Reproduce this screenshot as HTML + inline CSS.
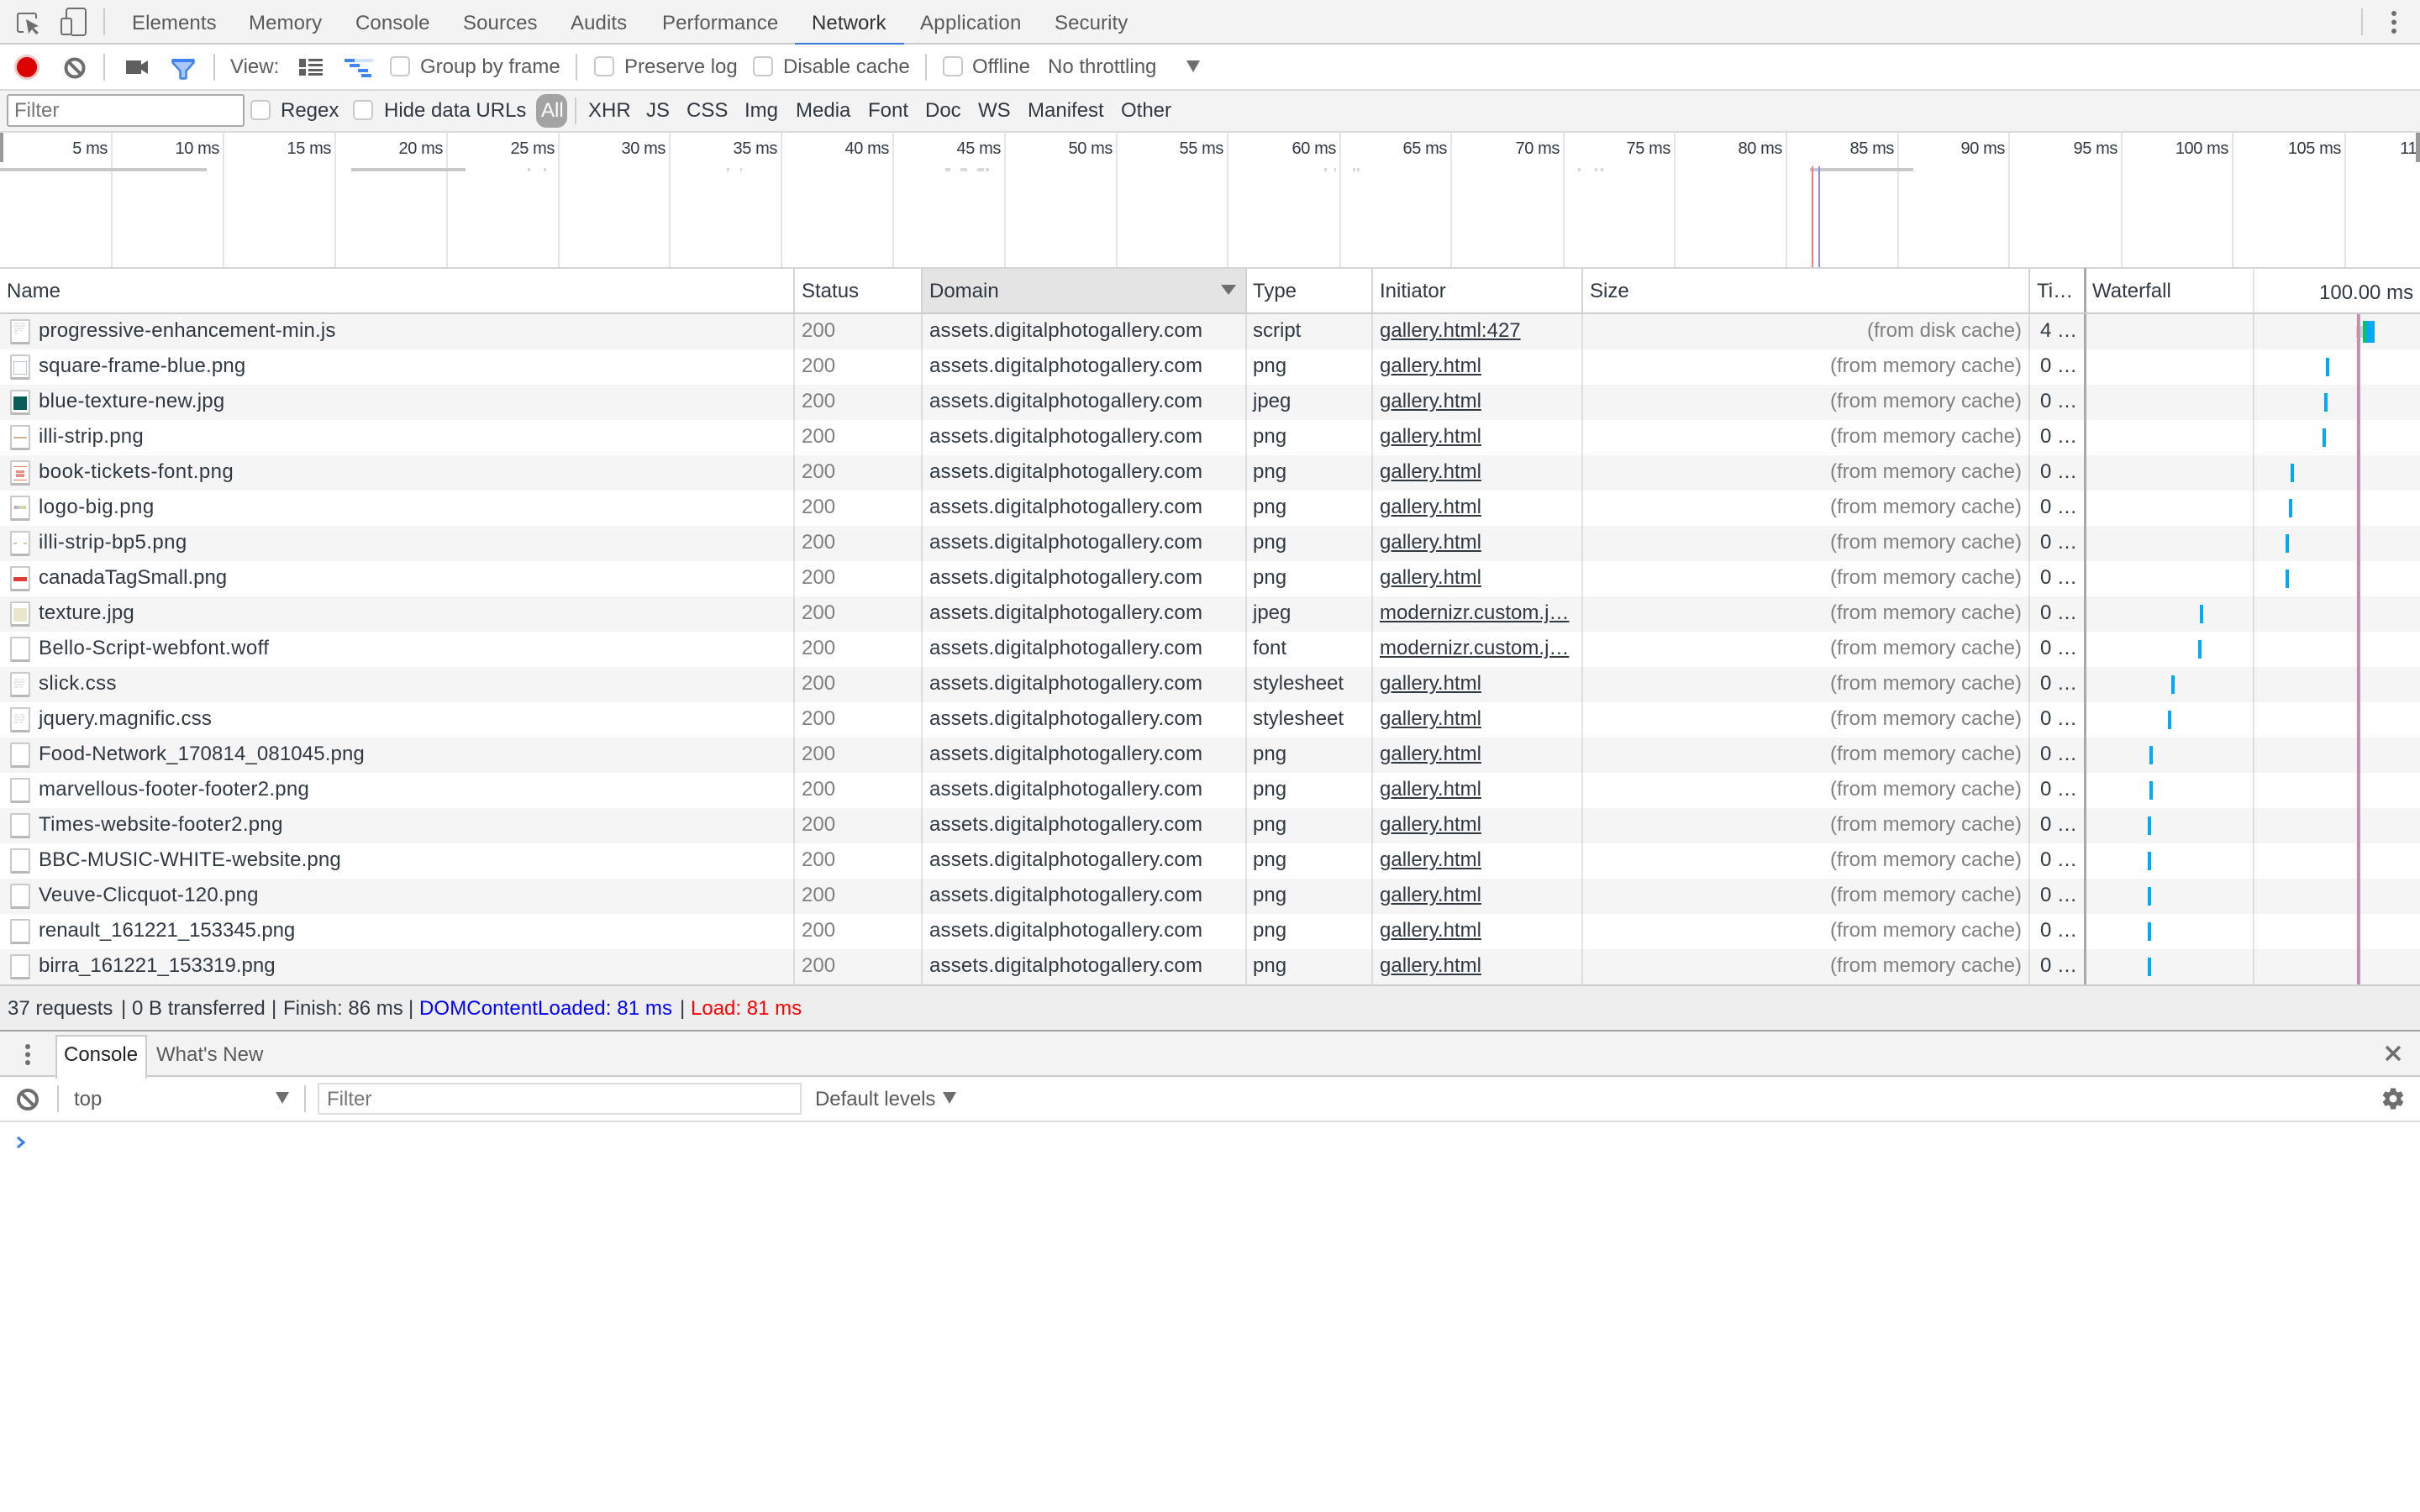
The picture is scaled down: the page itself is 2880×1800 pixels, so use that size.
<!DOCTYPE html>
<html>
<head>
<meta charset="utf-8">
<title>Network</title>
<style>
html,body{margin:0;padding:0;background:#fff}
body{width:2880px;height:1800px;position:relative;overflow:hidden;font-family:"Liberation Sans",Arial,sans-serif;font-size:24px;color:#303942}
div,span,a{position:absolute;white-space:nowrap}
.b{left:0;width:2880px}
.tab{top:10px;line-height:36px;color:#5a5a5a;letter-spacing:.08px}
.tl{top:62px;line-height:36px;color:#5a5a5a}
.f{top:114px;line-height:36px;color:#303942}
.g{top:157px;width:2px;height:162px;background:#e5e5e5;margin-left:-1px}
.t{top:163px;width:96px;text-align:right;font-size:20px;line-height:28px;letter-spacing:-.4px;color:#303942;margin-left:-1px}
.h{top:330px;line-height:34px;color:#303942}
.cb{width:20px;height:20px;border:2px solid #c9c9c9;border-radius:5px;background:#fff}
.hl{top:319px;width:2px;height:53px;background:#d4d4d4}
.cl{top:374px;width:2px;height:798px;background:rgba(0,0,0,.1)}
.r{left:0;width:2880px;height:42px;line-height:40px}
.o{background:#f5f5f5}
.n{left:46px}.st{left:954px;color:#808080}.d{left:1106px;letter-spacing:.18px}.ty{left:1491px}
.i{left:1642px;text-decoration:underline}
.s{left:1883px;width:523px;text-align:right;color:#808080}
.ti{left:2428px}
.th{left:12px;top:6px;width:20px;height:25px;background:#fff;border:2px solid #cacaca;border-bottom:3px solid #b8b8b8;border-radius:2px}
.in{left:2px;top:6px;width:16px;height:16px}
.bar{width:4px;top:10px;height:22px;background:#03a9f4}
.ss{top:1183px;line-height:36px}
</style>
</head>
<body>
<!-- panel backgrounds -->
<div class="b" style="top:0;height:51px;background:#f3f3f3"></div>
<div class="b" style="top:51px;height:2px;background:#ccc"></div>
<div class="b" style="top:106px;height:2px;background:#dcdcdc"></div>
<div class="b" style="top:108px;height:48px;background:#f3f3f3"></div>
<div class="b" style="top:156px;height:2px;background:#dcdcdc"></div>
<div class="b" style="top:318px;height:2px;background:#d4d4d4"></div>
<div class="b" style="top:372px;height:2px;background:#ccc"></div>
<div style="left:1097px;top:320px;width:385px;height:52px;background:#e4e4e4"></div>

<!-- main tabs -->
<div class="tab" style="left:157px">Elements</div>
<div class="tab" style="left:296px">Memory</div>
<div class="tab" style="left:423px">Console</div>
<div class="tab" style="left:551px">Sources</div>
<div class="tab" style="left:679px">Audits</div>
<div class="tab" style="left:788px">Performance</div>
<div class="tab" style="left:966px;color:#333">Network</div>
<div class="tab" style="left:1095px;letter-spacing:.3px">Application</div>
<div class="tab" style="left:1255px">Security</div>
<div style="left:946px;top:51px;width:130px;height:2px;background:#3879d9"></div>

<!-- toolbar 2 -->
<div class="tl" style="left:274px">View:</div>
<div class="cb" style="left:464px;top:67px"></div>
<div class="tl" style="left:500px">Group by frame</div>
<div class="cb" style="left:707px;top:67px"></div>
<div class="tl" style="left:743px">Preserve log</div>
<div class="cb" style="left:896px;top:67px"></div>
<div class="tl" style="left:932px">Disable cache</div>
<div class="cb" style="left:1122px;top:67px"></div>
<div class="tl" style="left:1157px">Offline</div>
<div class="tl" style="left:1247px">No throttling</div>

<!-- toolbar 3 -->
<div style="left:8px;top:112px;width:279px;height:35px;background:#fff;border:2px solid #aaa;border-radius:3px"></div>
<div class="f" style="left:17px;color:#757575">Filter</div>
<div class="cb" style="left:298px;top:119px"></div>
<div class="f" style="left:334px">Regex</div>
<div class="cb" style="left:420px;top:119px"></div>
<div class="f" style="left:457px">Hide data URLs</div>
<div style="left:638px;top:112px;width:37px;height:40px;border-radius:12px;background:#a3a3a3"></div>
<div class="f" style="left:644px;color:#fff">All</div>
<div class="f" style="left:700px">XHR</div>
<div class="f" style="left:769px">JS</div>
<div class="f" style="left:817px">CSS</div>
<div class="f" style="left:886px">Img</div>
<div class="f" style="left:947px">Media</div>
<div class="f" style="left:1033px">Font</div>
<div class="f" style="left:1101px">Doc</div>
<div class="f" style="left:1164px">WS</div>
<div class="f" style="left:1223px">Manifest</div>
<div class="f" style="left:1334px">Other</div>

<!-- timeline -->
<div style="left:0;top:158px;width:2880px;height:160px;overflow:hidden">
<div style="left:0;top:-158px;width:2880px;height:400px">
<div class="g" style="left:133px"></div><div class="g" style="left:266px"></div><div class="g" style="left:399px"></div><div class="g" style="left:532px"></div><div class="g" style="left:665px"></div><div class="g" style="left:797px"></div><div class="g" style="left:930px"></div><div class="g" style="left:1063px"></div><div class="g" style="left:1196px"></div><div class="g" style="left:1329px"></div><div class="g" style="left:1461px"></div><div class="g" style="left:1595px"></div><div class="g" style="left:1727px"></div><div class="g" style="left:1861px"></div><div class="g" style="left:1993px"></div><div class="g" style="left:2126px"></div><div class="g" style="left:2259px"></div><div class="g" style="left:2391px"></div><div class="g" style="left:2525px"></div><div class="g" style="left:2657px"></div><div class="g" style="left:2791px"></div>
<div class="t" style="left:33px">5 ms</div><div class="t" style="left:166px">10 ms</div><div class="t" style="left:299px">15 ms</div><div class="t" style="left:432px">20 ms</div><div class="t" style="left:565px">25 ms</div><div class="t" style="left:697px">30 ms</div><div class="t" style="left:830px">35 ms</div><div class="t" style="left:963px">40 ms</div><div class="t" style="left:1096px">45 ms</div><div class="t" style="left:1229px">50 ms</div><div class="t" style="left:1361px">55 ms</div><div class="t" style="left:1495px">60 ms</div><div class="t" style="left:1627px">65 ms</div><div class="t" style="left:1761px">70 ms</div><div class="t" style="left:1893px">75 ms</div><div class="t" style="left:2026px">80 ms</div><div class="t" style="left:2159px">85 ms</div><div class="t" style="left:2291px">90 ms</div><div class="t" style="left:2425px">95 ms</div><div class="t" style="left:2557px">100 ms</div><div class="t" style="left:2691px">105 ms</div><div class="t" style="left:2823px">110 ms</div>
<div style="left:2875px;top:157px;width:5px;height:200px;background:#fff"></div>
</div>
</div>

<!-- table header -->
<div class="hl" style="left:944px"></div><div class="hl" style="left:1096px"></div><div class="hl" style="left:1482px"></div><div class="hl" style="left:1632px"></div><div class="hl" style="left:1882px"></div><div class="hl" style="left:2414px"></div><div class="hl" style="left:2681px;background:#e5e5e5"></div>
<div class="hl" style="left:2480px;width:3px;background:#a9a9a9"></div>
<div class="h" style="left:8px">Name</div>
<div class="h" style="left:954px">Status</div>
<div class="h" style="left:1106px">Domain</div>
<div class="h" style="left:1491px">Type</div>
<div class="h" style="left:1642px">Initiator</div>
<div class="h" style="left:1892px">Size</div>
<div class="h" style="left:2424px">Ti…</div>
<div class="h" style="left:2490px">Waterfall</div>
<div class="h" style="left:2760px;top:332px">100.00 ms</div>

<!-- rows -->
<div class="r o" style="top:374px"><div class="th"><svg class="in" viewBox="0 0 16 16" style="top:0;left:1px;position:absolute"><path d="M2 3h5M9 3h5M1 6h8M10 6h5M2 9h12M1 12h6M9 12h3M2 15h4" stroke="#e2e2e2" stroke-width="1.5"/></svg></div><span class="n" style="letter-spacing:.18px">progressive-enhancement-min.js</span><span class="st">200</span><span class="d">assets.digitalphotogallery.com</span><span class="ty">script</span><span class="i">gallery.html:427</span><span class="s">(from disk cache)</span><span class="ti">4 …</span></div>
<div class="r" style="top:416px"><div class="th"><div class="in" style="width:14px;height:14px;border:1px solid #b5ccd2"></div></div><span class="n" style="letter-spacing:.17px">square-frame-blue.png</span><span class="st">200</span><span class="d">assets.digitalphotogallery.com</span><span class="ty">png</span><span class="i">gallery.html</span><span class="s">(from memory cache)</span><span class="ti">0 …</span></div>
<div class="r o" style="top:458px"><div class="th"><div class="in" style="background:#0a5c56"></div></div><span class="n" style="letter-spacing:.27px">blue-texture-new.jpg</span><span class="st">200</span><span class="d">assets.digitalphotogallery.com</span><span class="ty">jpeg</span><span class="i">gallery.html</span><span class="s">(from memory cache)</span><span class="ti">0 …</span></div>
<div class="r" style="top:500px"><div class="th"><div style="left:2px;top:12px;width:16px;height:2px;background:#c9b48a"></div></div><span class="n" style="letter-spacing:.26px">illi-strip.png</span><span class="st">200</span><span class="d">assets.digitalphotogallery.com</span><span class="ty">png</span><span class="i">gallery.html</span><span class="s">(from memory cache)</span><span class="ti">0 …</span></div>
<div class="r o" style="top:542px"><div class="th"><div style="left:2px;top:5px;width:16px;height:1px;background:#e57c73"></div><div style="left:5px;top:10px;width:10px;height:3px;background:#ea8f88"></div><div style="left:5px;top:14px;width:10px;height:4px;background:#ea8f88"></div><div style="left:2px;top:21px;width:16px;height:1px;background:#e57c73"></div></div><span class="n" style="letter-spacing:.45px">book-tickets-font.png</span><span class="st">200</span><span class="d">assets.digitalphotogallery.com</span><span class="ty">png</span><span class="i">gallery.html</span><span class="s">(from memory cache)</span><span class="ti">0 …</span></div>
<div class="r" style="top:584px"><div class="th"><div style="left:3px;top:10px;width:14px;height:4px;background:linear-gradient(90deg,#e58a8a,#b9cde0,#e6d9a0,#bcd9b0)"></div></div><span class="n" style="letter-spacing:.46px">logo-big.png</span><span class="st">200</span><span class="d">assets.digitalphotogallery.com</span><span class="ty">png</span><span class="i">gallery.html</span><span class="s">(from memory cache)</span><span class="ti">0 …</span></div>
<div class="r o" style="top:626px"><div class="th"><div style="left:2px;top:12px;width:4px;height:2px;background:#d9c59b"></div><div style="left:14px;top:12px;width:4px;height:2px;background:#d9c59b"></div></div><span class="n" style="letter-spacing:.4px">illi-strip-bp5.png</span><span class="st">200</span><span class="d">assets.digitalphotogallery.com</span><span class="ty">png</span><span class="i">gallery.html</span><span class="s">(from memory cache)</span><span class="ti">0 …</span></div>
<div class="r" style="top:668px"><div class="th"><div style="left:2px;top:11px;width:16px;height:5px;background:#e03a3a"></div></div><span class="n">canadaTagSmall.png</span><span class="st">200</span><span class="d">assets.digitalphotogallery.com</span><span class="ty">png</span><span class="i">gallery.html</span><span class="s">(from memory cache)</span><span class="ti">0 …</span></div>
<div class="r o" style="top:710px"><div class="th"><div class="in" style="background:#e9e6cc"></div></div><span class="n" style="letter-spacing:.17px">texture.jpg</span><span class="st">200</span><span class="d">assets.digitalphotogallery.com</span><span class="ty">jpeg</span><span class="i">modernizr.custom.j…</span><span class="s">(from memory cache)</span><span class="ti">0 …</span></div>
<div class="r" style="top:752px"><div class="th"></div><span class="n" style="letter-spacing:.37px">Bello-Script-webfont.woff</span><span class="st">200</span><span class="d">assets.digitalphotogallery.com</span><span class="ty">font</span><span class="i">modernizr.custom.j…</span><span class="s">(from memory cache)</span><span class="ti">0 …</span></div>
<div class="r o" style="top:794px"><div class="th"><svg class="in" viewBox="0 0 16 16" style="top:4px;left:1px;position:absolute"><path d="M2 3h5M9 3h5M1 6h8M10 6h5M2 9h12M1 12h6M9 12h3" stroke="#e2e2e2" stroke-width="1.5"/></svg></div><span class="n" style="letter-spacing:.4px">slick.css</span><span class="st">200</span><span class="d">assets.digitalphotogallery.com</span><span class="ty">stylesheet</span><span class="i">gallery.html</span><span class="s">(from memory cache)</span><span class="ti">0 …</span></div>
<div class="r" style="top:836px"><div class="th"><svg class="in" viewBox="0 0 16 16" style="top:4px;left:1px;position:absolute"><path d="M2 3h5M9 3h5M1 6h8M10 6h5M2 9h12M1 12h6M9 12h3" stroke="#e2e2e2" stroke-width="1.5"/></svg></div><span class="n" style="letter-spacing:.2px">jquery.magnific.css</span><span class="st">200</span><span class="d">assets.digitalphotogallery.com</span><span class="ty">stylesheet</span><span class="i">gallery.html</span><span class="s">(from memory cache)</span><span class="ti">0 …</span></div>
<div class="r o" style="top:878px"><div class="th"></div><span class="n" style="letter-spacing:.12px">Food-Network_170814_081045.png</span><span class="st">200</span><span class="d">assets.digitalphotogallery.com</span><span class="ty">png</span><span class="i">gallery.html</span><span class="s">(from memory cache)</span><span class="ti">0 …</span></div>
<div class="r" style="top:920px"><div class="th"></div><span class="n" style="letter-spacing:.25px">marvellous-footer-footer2.png</span><span class="st">200</span><span class="d">assets.digitalphotogallery.com</span><span class="ty">png</span><span class="i">gallery.html</span><span class="s">(from memory cache)</span><span class="ti">0 …</span></div>
<div class="r o" style="top:962px"><div class="th"></div><span class="n" style="letter-spacing:.3px">Times-website-footer2.png</span><span class="st">200</span><span class="d">assets.digitalphotogallery.com</span><span class="ty">png</span><span class="i">gallery.html</span><span class="s">(from memory cache)</span><span class="ti">0 …</span></div>
<div class="r" style="top:1004px"><div class="th"></div><span class="n" style="letter-spacing:.14px">BBC-MUSIC-WHITE-website.png</span><span class="st">200</span><span class="d">assets.digitalphotogallery.com</span><span class="ty">png</span><span class="i">gallery.html</span><span class="s">(from memory cache)</span><span class="ti">0 …</span></div>
<div class="r o" style="top:1046px"><div class="th"></div><span class="n" style="letter-spacing:.25px">Veuve-Clicquot-120.png</span><span class="st">200</span><span class="d">assets.digitalphotogallery.com</span><span class="ty">png</span><span class="i">gallery.html</span><span class="s">(from memory cache)</span><span class="ti">0 …</span></div>
<div class="r" style="top:1088px"><div class="th"></div><span class="n" style="letter-spacing:-.07px">renault_161221_153345.png</span><span class="st">200</span><span class="d">assets.digitalphotogallery.com</span><span class="ty">png</span><span class="i">gallery.html</span><span class="s">(from memory cache)</span><span class="ti">0 …</span></div>
<div class="r o" style="top:1130px"><div class="th"></div><span class="n">birra_161221_153319.png</span><span class="st">200</span><span class="d">assets.digitalphotogallery.com</span><span class="ty">png</span><span class="i">gallery.html</span><span class="s">(from memory cache)</span><span class="ti">0 …</span></div>

<!-- column lines -->
<div class="cl" style="left:944px"></div><div class="cl" style="left:1096px"></div><div class="cl" style="left:1482px"></div><div class="cl" style="left:1632px"></div><div class="cl" style="left:1882px"></div><div class="cl" style="left:2414px"></div><div class="cl" style="left:2681px"></div>
<div class="cl" style="left:2480px;width:3px;background:#a9a9a9"></div>

<!-- waterfall -->
<div style="left:2804px;top:388px;width:8px;height:14px;background:#d0d0d0"></div>
<div style="left:2812px;top:382px;width:4px;height:26px;background:#00c853"></div>
<div style="left:2816px;top:382px;width:10px;height:26px;background:#03a9f4"></div>
<div class="bar" style="left:2768px;top:426px"></div>
<div class="bar" style="left:2766px;top:468px"></div>
<div class="bar" style="left:2764px;top:510px"></div>
<div class="bar" style="left:2726px;top:552px"></div>
<div class="bar" style="left:2724px;top:594px"></div>
<div class="bar" style="left:2720px;top:636px"></div>
<div class="bar" style="left:2720px;top:678px"></div>
<div class="bar" style="left:2618px;top:720px"></div>
<div class="bar" style="left:2616px;top:762px"></div>
<div class="bar" style="left:2584px;top:804px"></div>
<div class="bar" style="left:2580px;top:846px"></div>
<div class="bar" style="left:2558px;top:888px"></div>
<div class="bar" style="left:2558px;top:930px"></div>
<div class="bar" style="left:2556px;top:972px"></div>
<div class="bar" style="left:2556px;top:1014px"></div>
<div class="bar" style="left:2556px;top:1056px"></div>
<div class="bar" style="left:2556px;top:1098px"></div>
<div class="bar" style="left:2556px;top:1140px"></div>
<div style="left:2805px;top:374px;width:2px;height:798px;background:#ef8080"></div>
<div style="left:2807px;top:374px;width:2px;height:798px;background:#a09cf0"></div>

<!-- status bar -->
<div class="b" style="top:1172px;height:2px;background:#ccc"></div>
<div class="b" style="top:1174px;height:52px;background:#eee"></div>
<div class="b" style="top:1226px;height:2px;background:#a3a3a3"></div>
<div class="ss" style="left:9px">37 requests</div>
<div class="ss" style="left:144px">|</div>
<div class="ss" style="left:157px">0 B transferred</div>
<div class="ss" style="left:323px">|</div>
<div class="ss" style="left:337px">Finish: 86 ms</div>
<div class="ss" style="left:486px">|</div>
<div class="ss" style="left:499px;color:#00f;letter-spacing:.1px">DOMContentLoaded: 81 ms</div>
<div class="ss" style="left:809px">|</div>
<div class="ss" style="left:822px;color:#f00">Load: 81 ms</div>

<!-- drawer -->
<div class="b" style="top:1228px;height:52px;background:#f3f3f3"></div>
<div class="b" style="top:1280px;height:2px;background:#ccc"></div>
<div style="left:66px;top:1232px;width:105px;height:50px;background:#fff;border:2px solid #ccc;border-bottom:0"></div>
<div style="left:76px;top:1238px;line-height:36px;color:#222">Console</div>
<div style="left:186px;top:1238px;line-height:36px;color:#5a5a5a">What's New</div>
<div class="b" style="top:1334px;height:2px;background:#ddd"></div>
<div style="left:88px;top:1291px;line-height:36px;color:#5a5a5a">top</div>
<div style="left:378px;top:1289px;width:572px;height:34px;border:2px solid #ddd"></div>
<div style="left:389px;top:1291px;line-height:36px;color:#757575">Filter</div>
<div style="left:970px;top:1291px;line-height:36px;color:#5a5a5a;letter-spacing:-.05px">Default levels</div>

<!-- icons -->
<svg width="2880" height="1800" viewBox="0 0 2880 1800" style="position:absolute;left:0;top:0">
  <!-- inspect -->
  <path d="M43 22v-4a2 2 0 0 0-2-2H23a2 2 0 0 0-2 2v18a2 2 0 0 0 2 2h5" fill="none" stroke="#6e6e6e" stroke-width="2"/>
  <path d="M31 23l15 8-6 2 6 6-3 2-5-6-4 5z" fill="#6e6e6e"/>
  <!-- device -->
  <path d="M79 21v-8a3 3 0 0 1 3-3h17a3 3 0 0 1 3 3v26a3 3 0 0 1-3 3H85" fill="none" stroke="#6e6e6e" stroke-width="2"/>
  <rect x="73" y="22" width="12" height="19" rx="2" fill="none" stroke="#6e6e6e" stroke-width="2"/>
  <path d="M124 10v32" stroke="#ccc" stroke-width="2"/>
  <path d="M2811 10v32" stroke="#ccc" stroke-width="2"/>
  <circle cx="2849" cy="16" r="3" fill="#6e6e6e"/><circle cx="2849" cy="26.500" r="3" fill="#6e6e6e"/><circle cx="2849" cy="37" r="3" fill="#6e6e6e"/>
  <!-- record -->
  <circle cx="32" cy="80" r="15" fill="#f7c9c9"/>
  <circle cx="32" cy="80" r="12" fill="#dc0000"/>
  <!-- clear -->
  <circle cx="89" cy="81" r="10.500" fill="none" stroke="#6e6e6e" stroke-width="4"/>
  <path d="M81.500 73.500l15 15" stroke="#6e6e6e" stroke-width="4"/>
  <path d="M124 64v32M255 64v32M686 64v32M1102 64v32" stroke="#ccc" stroke-width="2"/>
  <!-- camera -->
  <path d="M150 72h18v5l8-5v16l-8-5v5h-18z" fill="#5f5f5f"/>
  <!-- funnel -->
  <path d="M205.500 71.500h25v3l-9 10v8a1 1 0 0 1-1 1h-5a1 1 0 0 1-1-1v-8l-9-10z" fill="#a9c8fa" stroke="#3f83ee" stroke-width="2.500" stroke-linejoin="round"/>
  <path d="M205 70h26v4h-26z" fill="#3f83ee"/>
  <!-- list view -->
  <path d="M356 70h8v10h-8zM356 82h8v8h-8zM367 70h17v3h-17zM367 76h17v3h-17zM367 82h17v3h-17zM367 87h17v3h-17z" fill="#5f5f5f"/>
  <!-- waterfall view -->
  <rect x="410" y="70" width="12" height="4" fill="#4285f4"/><rect x="422" y="70" width="22" height="4" fill="#d2e1fb"/>
  <rect x="416" y="76" width="12" height="4" fill="#4285f4"/>
  <rect x="426" y="82" width="12" height="4" fill="#4285f4"/>
  <rect x="430" y="88" width="12" height="4" fill="#4285f4"/>
  <!-- throttling arrow -->
  <path d="M1412 72h16l-8 14z" fill="#6e6e6e"/>
  <!-- filter separator -->
  <path d="M685 116v32" stroke="#ccc" stroke-width="2"/>
  <!-- timeline handles and track -->
  <rect x="0" y="158" width="4" height="35" fill="#999"/>
  <rect x="2875" y="158" width="5" height="35" fill="#999"/>
  <g fill="#c9c9c9">
    <rect x="0" y="200" width="246" height="4"/><rect x="418" y="200" width="136" height="4"/>
    <rect x="628" y="200" width="3" height="4" opacity=".7"/><rect x="647" y="200" width="3" height="4" opacity=".7"/>
    <rect x="865" y="200" width="3" height="4" opacity=".7"/><rect x="881" y="200" width="2" height="4" opacity=".7"/>
    <rect x="1125" y="200" width="6" height="4" opacity=".7"/><rect x="1143" y="200" width="8" height="4" opacity=".7"/><rect x="1163" y="200" width="8" height="4" opacity=".7"/><rect x="1173" y="200" width="4" height="4" opacity=".7"/>
    <rect x="1576" y="200" width="3" height="4" opacity=".7"/><rect x="1588" y="200" width="2" height="4" opacity=".7"/>
    <rect x="1610" y="200" width="3" height="4" opacity=".7"/><rect x="1615" y="200" width="3" height="4" opacity=".7"/>
    <rect x="1878" y="200" width="3" height="4" opacity=".7"/><rect x="1898" y="200" width="3" height="4" opacity=".7"/><rect x="1905" y="200" width="3" height="4" opacity=".7"/>
    <rect x="2154" y="200" width="123" height="4"/>
  </g>
  <rect x="2156" y="198" width="2" height="120" fill="#f07f7f"/>
  <rect x="2164" y="198" width="2" height="120" fill="#8f8cf0"/>
  <!-- sort arrow -->
  <path d="M1453 339h18l-9 12z" fill="#6e6e6e"/>
  <!-- drawer icons -->
  <circle cx="33" cy="1246" r="3" fill="#6e6e6e"/><circle cx="33" cy="1255.500" r="3" fill="#6e6e6e"/><circle cx="33" cy="1265" r="3" fill="#6e6e6e"/>
  <path d="M2840 1246l16 16M2856 1246l-16 16" stroke="#6e6e6e" stroke-width="3.500"/>
  <!-- console toolbar -->
  <circle cx="33" cy="1309" r="11" fill="none" stroke="#6e6e6e" stroke-width="4"/>
  <path d="M25 1301l16 16" stroke="#6e6e6e" stroke-width="4"/>
  <path d="M69 1292v32M363 1292v32" stroke="#ccc" stroke-width="2"/>
  <path d="M328 1300h16l-8 14zM1122 1300h16l-8 14z" fill="#6e6e6e"/>
  <g transform="translate(2833 1293) scale(1.250)"><path fill="#6e6e6e" d="M19.430 12.980c.04-.32.07-.64.07-.98s-.03-.66-.07-.98l2.110-1.650c.19-.15.24-.42.12-.64l-2-3.460c-.12-.22-.39-.3-.61-.22l-2.490 1c-.52-.4-1.080-.73-1.690-.98l-.38-2.650C14.460 2.180 14.250 2 14 2h-4c-.25 0-.46.18-.49.42l-.38 2.650c-.61.25-1.170.59-1.690.98l-2.490-1c-.23-.09-.49 0-.61.22l-2 3.460c-.13.22-.07.49.12.64l2.110 1.650c-.04.32-.07.65-.07.98s.03.66.07.98l-2.110 1.650c-.19.15-.24.42-.12.64l2 3.460c.12.22.39.3.61.22l2.490-1c.52.4 1.080.73 1.690.98l.38 2.650c.03.24.24.42.49.42h4c.25 0 .46-.18.49-.42l.38-2.650c.61-.25 1.170-.59 1.690-.98l2.490 1c.23.09.49 0 .61-.22l2-3.460c.12-.22.07-.49-.12-.64l-2.110-1.650zM12 15.500c-1.930 0-3.500-1.570-3.500-3.500s1.570-3.500 3.500-3.500 3.500 1.570 3.500 3.500-1.570 3.500-3.500 3.500z"/></g>
  <!-- prompt -->
  <path d="M21 1354l7 6-7 6" fill="none" stroke="#367cf1" stroke-width="3"/>
</svg>
</body>
</html>
